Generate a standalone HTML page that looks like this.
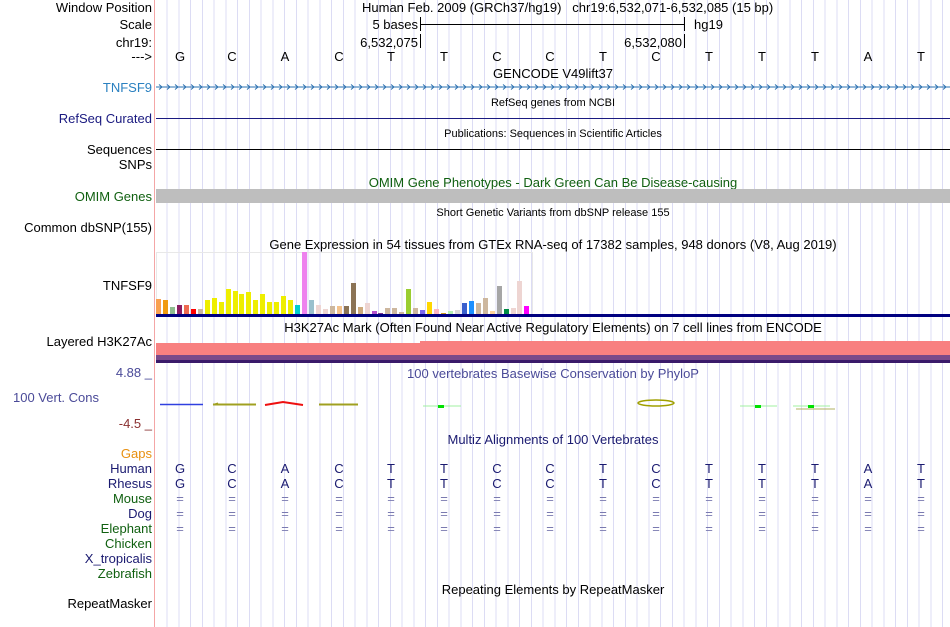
<!DOCTYPE html>
<html><head><meta charset="utf-8"><style>
html,body{margin:0;padding:0;background:#fff;}
body{width:950px;height:627px;position:relative;overflow:hidden;font-family:"Liberation Sans",Arial,sans-serif;font-size:13px;color:#000;}
.a{position:absolute;white-space:nowrap;line-height:15px;}
.l{position:absolute;right:798px;text-align:right;white-space:nowrap;line-height:15px;}
.c{position:absolute;white-space:nowrap;line-height:15px;transform:translateX(-50%);}
.s{font-size:11px;}
.grid{position:absolute;left:156px;top:0;width:794px;height:627px;background:repeating-linear-gradient(to right,transparent 0,transparent 10.5px,#dcdcf4 10.5px,#dcdcf4 11.5px,transparent 11.5px,transparent 11.75px);}
.hl{position:absolute;left:156px;width:794px;}
</style></head><body>
<div class="grid"></div>
<div style="position:absolute;left:154px;top:0;width:1px;height:627px;background:#f4a6a6"></div>

<div class="l" style="top:0">Window Position</div>
<div class="a" style="left:362px;top:0">Human Feb. 2009 (GRCh37/hg19)&nbsp;&nbsp; chr19:6,532,071-6,532,085 (15 bp)</div>
<div class="l" style="top:17px">Scale</div>
<div class="a" style="right:532px;top:17px">5 bases</div>
<div style="position:absolute;left:420px;top:17px;width:1px;height:14px;background:#000"></div>
<div style="position:absolute;left:420px;top:24px;width:264px;height:1px;background:#000"></div>
<div style="position:absolute;left:684px;top:17px;width:1px;height:14px;background:#000"></div>
<div class="a" style="left:694px;top:17px">hg19</div>
<div class="l" style="top:35px">chr19:</div>
<div class="a" style="right:532px;top:35px">6,532,075</div>
<div style="position:absolute;left:420px;top:34px;width:1px;height:14px;background:#000"></div>
<div class="a" style="right:268px;top:35px">6,532,080</div>
<div style="position:absolute;left:684px;top:34px;width:1px;height:14px;background:#000"></div>
<div class="l" style="top:49px">---&gt;</div>
<div class="c" style="left:180px;top:49px">G</div><div class="c" style="left:232px;top:49px">C</div><div class="c" style="left:285px;top:49px">A</div><div class="c" style="left:339px;top:49px">C</div><div class="c" style="left:391px;top:49px">T</div><div class="c" style="left:444px;top:49px">T</div><div class="c" style="left:497px;top:49px">C</div><div class="c" style="left:550px;top:49px">C</div><div class="c" style="left:603px;top:49px">T</div><div class="c" style="left:656px;top:49px">C</div><div class="c" style="left:709px;top:49px">T</div><div class="c" style="left:762px;top:49px">T</div><div class="c" style="left:815px;top:49px">T</div><div class="c" style="left:868px;top:49px">A</div><div class="c" style="left:921px;top:49px">T</div>

<div class="c" style="left:553px;top:66px">GENCODE V49lift37</div>
<div class="l" style="top:80px;color:#2a80c0">TNFSF9</div>
<svg style="position:absolute;left:156px;top:82px" width="794" height="10">
<defs><pattern id="ch" x="2" y="0" width="8" height="10" patternUnits="userSpaceOnUse"><polyline points="1,2.5 4,5 1,7.5" fill="none" stroke="#2a70b0" stroke-width="1"/></pattern></defs>
<rect x="0" y="4.5" width="794" height="1" fill="#2a70b0"/>
<rect x="0" y="0" width="794" height="10" fill="url(#ch)"/>
</svg>

<div class="c s" style="left:553px;top:96px">RefSeq genes from NCBI</div>
<div class="l" style="top:111px;color:#1a1a80">RefSeq Curated</div>
<div class="hl" style="top:118px;height:1px;background:#1a1a80"></div>

<div class="c s" style="left:553px;top:127px">Publications: Sequences in Scientific Articles</div>
<div class="l" style="top:142px">Sequences</div>
<div class="hl" style="top:149px;height:1px;background:#000"></div>
<div class="l" style="top:157px">SNPs</div>

<div class="c" style="left:553px;top:175px;color:#106010">OMIM Gene Phenotypes - Dark Green Can Be Disease-causing</div>
<div class="hl" style="top:189px;height:14px;background:#bebebe"></div>
<div class="l" style="top:189px;color:#106010">OMIM Genes</div>

<div class="c s" style="left:553px;top:206px">Short Genetic Variants from dbSNP release 155</div>
<div class="l" style="top:220px">Common dbSNP(155)</div>

<div class="c" style="left:553px;top:237px">Gene Expression in 54 tissues from GTEx RNA-seq of 17382 samples, 948 donors (V8, Aug 2019)</div>
<div style="position:absolute;left:156px;top:252px;width:377px;height:62px;border:1px solid #e8e8e8;border-bottom:none;box-sizing:border-box"></div>
<svg style="position:absolute;left:156px;top:252px" width="380" height="62">
<g>
<rect x="0" y="47" width="5" height="15" fill="#f9a050"/>
<rect x="7" y="48" width="5" height="14" fill="#f09a10"/>
<rect x="14" y="55" width="5" height="7" fill="#8fbc8f"/>
<rect x="21" y="53" width="5" height="9" fill="#8b1c62"/>
<rect x="28" y="53" width="5" height="9" fill="#ee6a50"/>
<rect x="35" y="57" width="5" height="5" fill="#ff0000"/>
<rect x="42" y="57" width="5" height="5" fill="#cdb79e"/>
<rect x="49" y="48" width="5" height="14" fill="#eeee00"/>
<rect x="56" y="46" width="5" height="16" fill="#eeee00"/>
<rect x="63" y="50" width="5" height="12" fill="#eeee00"/>
<rect x="70" y="37" width="5" height="25" fill="#eeee00"/>
<rect x="77" y="39" width="5" height="23" fill="#eeee00"/>
<rect x="83" y="42" width="5" height="20" fill="#eeee00"/>
<rect x="90" y="40" width="5" height="22" fill="#eeee00"/>
<rect x="97" y="48" width="5" height="14" fill="#eeee00"/>
<rect x="104" y="42" width="5" height="20" fill="#eeee00"/>
<rect x="111" y="50" width="5" height="12" fill="#eeee00"/>
<rect x="118" y="50" width="5" height="12" fill="#eeee00"/>
<rect x="125" y="44" width="5" height="18" fill="#eeee00"/>
<rect x="132" y="48" width="5" height="14" fill="#eeee00"/>
<rect x="139" y="53" width="5" height="9" fill="#00cdcd"/>
<rect x="146" y="0" width="5" height="62" fill="#ee82ee"/>
<rect x="153" y="48" width="5" height="14" fill="#9ac0cd"/>
<rect x="160" y="53" width="5" height="9" fill="#eed5d2"/>
<rect x="167" y="57" width="5" height="5" fill="#eed5d2"/>
<rect x="174" y="54" width="5" height="8" fill="#cdb79e"/>
<rect x="181" y="54" width="5" height="8" fill="#f4c28c"/>
<rect x="188" y="54" width="5" height="8" fill="#8b7355"/>
<rect x="195" y="31" width="5" height="31" fill="#8b7355"/>
<rect x="202" y="55" width="5" height="7" fill="#cdaa7d"/>
<rect x="209" y="51" width="5" height="11" fill="#eed5d2"/>
<rect x="216" y="59" width="5" height="3" fill="#b452cd"/>
<rect x="222" y="61" width="5" height="1" fill="#7a378b"/>
<rect x="229" y="56" width="5" height="6" fill="#cdb79e"/>
<rect x="236" y="56" width="5" height="6" fill="#cdb79e"/>
<rect x="243" y="60" width="5" height="2" fill="#cdb79e"/>
<rect x="250" y="37" width="5" height="25" fill="#9acd32"/>
<rect x="257" y="56" width="5" height="6" fill="#cdb79e"/>
<rect x="264" y="58" width="5" height="4" fill="#7b68ee"/>
<rect x="271" y="50" width="5" height="12" fill="#ffd700"/>
<rect x="278" y="57" width="5" height="5" fill="#ffb6c1"/>
<rect x="285" y="61" width="5" height="1" fill="#cd9b1d"/>
<rect x="292" y="59" width="5" height="3" fill="#b4eeb4"/>
<rect x="299" y="58" width="5" height="4" fill="#d9d9d9"/>
<rect x="306" y="51" width="5" height="11" fill="#3a5fcd"/>
<rect x="313" y="49" width="5" height="13" fill="#1e90ff"/>
<rect x="320" y="51" width="5" height="11" fill="#cdb79e"/>
<rect x="327" y="46" width="5" height="16" fill="#cdb79e"/>
<rect x="334" y="59" width="5" height="3" fill="#ffd39b"/>
<rect x="341" y="34" width="5" height="28" fill="#a6a6a6"/>
<rect x="348" y="57" width="5" height="5" fill="#008b45"/>
<rect x="355" y="56" width="5" height="6" fill="#eed5d2"/>
<rect x="361" y="29" width="5" height="33" fill="#eed5d2"/>
<rect x="368" y="54" width="5" height="8" fill="#ff00ff"/>
</g></svg>
<div class="l" style="top:278px">TNFSF9</div>
<div class="hl" style="top:314px;height:3px;background:#000080"></div>

<div class="c" style="left:553px;top:320px">H3K27Ac Mark (Often Found Near Active Regulatory Elements) on 7 cell lines from ENCODE</div>
<div class="l" style="top:334px">Layered H3K27Ac</div>
<div style="position:absolute;left:156px;top:343px;width:264px;height:12px;background:#f88080"></div>
<div style="position:absolute;left:420px;top:341px;width:530px;height:14px;background:#f88080"></div>
<div class="hl" style="top:355px;height:5px;background:#7a4a8a"></div>
<div class="hl" style="top:360px;height:3px;background:#3a1a6a"></div>

<div class="l" style="top:365px;color:#4a4a98">4.88 _</div>
<div class="c" style="left:553px;top:366px;color:#4a4a98">100 vertebrates Basewise Conservation by PhyloP</div>
<div class="a" style="left:13px;top:390px;color:#4a4a98">100 Vert. Cons</div>
<div class="l" style="top:416px;color:#8a3030">-4.5 _</div>
<svg style="position:absolute;left:156px;top:395px" width="794" height="20">
<line x1="4" y1="9.5" x2="47" y2="9.5" stroke="#3040e0" stroke-width="1.5"/>
<path d="M57 9 L100 9 M57 10 L100 10 M57 9.5 L62 8" stroke="#a0a020" stroke-width="1" fill="none"/>
<path d="M109 10 L127 7 L147 10" stroke="#ee1010" stroke-width="2" fill="none"/>
<path d="M163 9 L202 9 M163 10 L202 10" stroke="#a0a020" stroke-width="1" fill="none"/>
<line x1="267" y1="11" x2="305" y2="11" stroke="#a0f0a0" stroke-width="1"/>
<rect x="282" y="10" width="6" height="3" fill="#00e000"/>
<ellipse cx="500" cy="8" rx="18" ry="3" fill="none" stroke="#a0a000" stroke-width="1.5"/>
<line x1="584" y1="11" x2="621" y2="11" stroke="#a0f0a0" stroke-width="1"/>
<rect x="599" y="10" width="6" height="3" fill="#00e000"/>
<line x1="637" y1="11" x2="674" y2="11" stroke="#a0f0a0" stroke-width="1"/>
<line x1="640" y1="14" x2="679" y2="14" stroke="#b0b060" stroke-width="1"/>
<rect x="652" y="10" width="6" height="3" fill="#00e000"/>
</svg>

<div class="c" style="left:553px;top:432px;color:#1a1a70">Multiz Alignments of 100 Vertebrates</div>
<div class="l" style="top:446px;color:#e89010">Gaps</div>
<div class="l" style="top:461px;color:#1a1a70">Human</div>
<div class="l" style="top:476px;color:#1a1a70">Rhesus</div>
<div class="l" style="top:491px;color:#106010">Mouse</div>
<div class="l" style="top:506px;color:#1a1a70">Dog</div>
<div class="l" style="top:521px;color:#106010">Elephant</div>
<div class="l" style="top:536px;color:#106010">Chicken</div>
<div class="l" style="top:551px;color:#1a1a70">X_tropicalis</div>
<div class="l" style="top:566px;color:#106010">Zebrafish</div>
<div style="position:absolute;left:0;top:0;color:#1a1a70">
<div class="c" style="left:180px;top:461px">G</div><div class="c" style="left:232px;top:461px">C</div><div class="c" style="left:285px;top:461px">A</div><div class="c" style="left:339px;top:461px">C</div><div class="c" style="left:391px;top:461px">T</div><div class="c" style="left:444px;top:461px">T</div><div class="c" style="left:497px;top:461px">C</div><div class="c" style="left:550px;top:461px">C</div><div class="c" style="left:603px;top:461px">T</div><div class="c" style="left:656px;top:461px">C</div><div class="c" style="left:709px;top:461px">T</div><div class="c" style="left:762px;top:461px">T</div><div class="c" style="left:815px;top:461px">T</div><div class="c" style="left:868px;top:461px">A</div><div class="c" style="left:921px;top:461px">T</div>
<div class="c" style="left:180px;top:476px">G</div><div class="c" style="left:232px;top:476px">C</div><div class="c" style="left:285px;top:476px">A</div><div class="c" style="left:339px;top:476px">C</div><div class="c" style="left:391px;top:476px">T</div><div class="c" style="left:444px;top:476px">T</div><div class="c" style="left:497px;top:476px">C</div><div class="c" style="left:550px;top:476px">C</div><div class="c" style="left:603px;top:476px">T</div><div class="c" style="left:656px;top:476px">C</div><div class="c" style="left:709px;top:476px">T</div><div class="c" style="left:762px;top:476px">T</div><div class="c" style="left:815px;top:476px">T</div><div class="c" style="left:868px;top:476px">A</div><div class="c" style="left:921px;top:476px">T</div>
</div>
<div style="position:absolute;left:0;top:0;color:#7a7ab0">
<div class="c" style="left:180px;top:491px">=</div><div class="c" style="left:232px;top:491px">=</div><div class="c" style="left:285px;top:491px">=</div><div class="c" style="left:339px;top:491px">=</div><div class="c" style="left:391px;top:491px">=</div><div class="c" style="left:444px;top:491px">=</div><div class="c" style="left:497px;top:491px">=</div><div class="c" style="left:550px;top:491px">=</div><div class="c" style="left:603px;top:491px">=</div><div class="c" style="left:656px;top:491px">=</div><div class="c" style="left:709px;top:491px">=</div><div class="c" style="left:762px;top:491px">=</div><div class="c" style="left:815px;top:491px">=</div><div class="c" style="left:868px;top:491px">=</div><div class="c" style="left:921px;top:491px">=</div>
<div class="c" style="left:180px;top:506px">=</div><div class="c" style="left:232px;top:506px">=</div><div class="c" style="left:285px;top:506px">=</div><div class="c" style="left:339px;top:506px">=</div><div class="c" style="left:391px;top:506px">=</div><div class="c" style="left:444px;top:506px">=</div><div class="c" style="left:497px;top:506px">=</div><div class="c" style="left:550px;top:506px">=</div><div class="c" style="left:603px;top:506px">=</div><div class="c" style="left:656px;top:506px">=</div><div class="c" style="left:709px;top:506px">=</div><div class="c" style="left:762px;top:506px">=</div><div class="c" style="left:815px;top:506px">=</div><div class="c" style="left:868px;top:506px">=</div><div class="c" style="left:921px;top:506px">=</div>
<div class="c" style="left:180px;top:521px">=</div><div class="c" style="left:232px;top:521px">=</div><div class="c" style="left:285px;top:521px">=</div><div class="c" style="left:339px;top:521px">=</div><div class="c" style="left:391px;top:521px">=</div><div class="c" style="left:444px;top:521px">=</div><div class="c" style="left:497px;top:521px">=</div><div class="c" style="left:550px;top:521px">=</div><div class="c" style="left:603px;top:521px">=</div><div class="c" style="left:656px;top:521px">=</div><div class="c" style="left:709px;top:521px">=</div><div class="c" style="left:762px;top:521px">=</div><div class="c" style="left:815px;top:521px">=</div><div class="c" style="left:868px;top:521px">=</div><div class="c" style="left:921px;top:521px">=</div>
</div>

<div class="c" style="left:553px;top:582px">Repeating Elements by RepeatMasker</div>
<div class="l" style="top:596px">RepeatMasker</div>
</body></html>
